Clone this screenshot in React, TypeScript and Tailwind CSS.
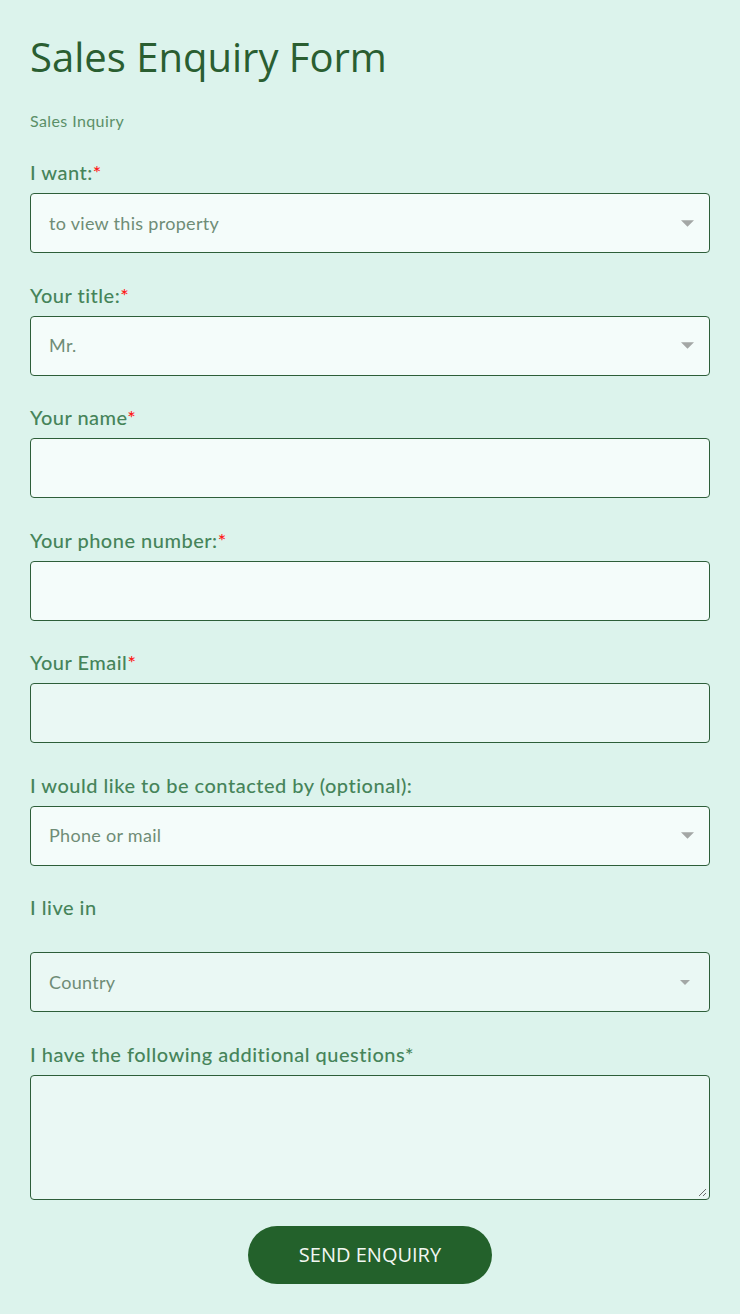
import React from 'react';

interface Field {
  label: string;
  required?: boolean;
  redStar?: boolean;
  kind: 'select' | 'input' | 'textarea';
  value?: string;
  tint?: boolean;
  spaced?: boolean;
  smallArrow?: boolean;
}

const fields: Field[] = [
  { label: 'I want:', required: true, redStar: true, kind: 'select', value: 'to view this property' },
  { label: 'Your title:', required: true, redStar: true, kind: 'select', value: 'Mr.' },
  { label: 'Your name', required: true, redStar: true, kind: 'input' },
  { label: 'Your phone number:', required: true, redStar: true, kind: 'input' },
  { label: 'Your Email', required: true, redStar: true, kind: 'input', tint: true },
  { label: 'I would like to be contacted by (optional):', kind: 'select', value: 'Phone or mail' },
  { label: 'I live in', kind: 'select', value: 'Country', tint: true, spaced: true, smallArrow: true },
  { label: 'I have the following additional questions', required: true, kind: 'textarea', tint: true },
];

const Caret: React.FC<{ small?: boolean }> = ({ small }) => (
  <svg
    width={small ? 10 : 13}
    height={small ? 5 : 7}
    viewBox="0 0 12 6"
    className={small ? 'mr-[4px]' : ''}
  >
    <path d="M0 0 L12 0 L6 6 Z" fill="#a3a7a5" />
  </svg>
);

const App: React.FC = () => {
  return (
    <div
      className="min-h-[1314px] w-full bg-[#dcf3ec] px-[30px] pt-[33px] pb-[30px]"
      style={{ fontFamily: 'Lato, "Open Sans", sans-serif' }}
    >
      <h1
        className="text-[40px] leading-[48px] text-[#2a5e31]"
        style={{ fontFamily: '"Open Sans", sans-serif' }}
      >
        Sales Enquiry Form
      </h1>
      <p className="mt-[30px] text-[16px] leading-[20px] tracking-[0.4px] text-[#5b8f68]">Sales Inquiry</p>

      <form className="mt-[30px] flex flex-col gap-[30.5px]">
        {fields.map((f) => (
          <div key={f.label} className="flex flex-col">
            <label
              className={`-mt-[1px] text-[20px] leading-[24px] font-medium tracking-[0.5px] text-[#46845a] ${
                f.spaced ? 'mb-[33px]' : 'mb-[9px]'
              }`}
            >
              {f.label}
              {f.required && (
                <span className={f.redStar ? 'text-[#ff1a1a]' : 'text-[#46845a]'}>*</span>
              )}
            </label>
            {f.kind === 'textarea' ? (
              <div className="relative h-[125px] rounded-[4px] border border-[#2d5e39] bg-[#eaf8f4]">
                <svg width="9" height="9" viewBox="0 0 9 9" className="absolute right-[2px] bottom-[2px]">
                  <path d="M8 1 L1 8 M8 5 L5 8" stroke="#6b6b6b" strokeWidth="1" />
                </svg>
              </div>
            ) : (
              <div
                className={`flex h-[60px] items-center justify-between rounded-[4px] border border-[#2d5e39] pl-[18px] pr-[15px] ${
                  f.tint ? 'bg-[#eaf8f4]' : 'bg-[#f4fcfa]'
                }`}
              >
                <span className="text-[18px] tracking-[0.3px] text-[#6f8c76]">{f.value ?? ''}</span>
                {f.kind === 'select' && <Caret small={f.smallArrow} />}
              </div>
            )}
          </div>
        ))}
        <div className="-mt-[4px] flex justify-center">
          <button
            type="button"
            className="h-[58px] w-[244px] rounded-full bg-[#23612b] text-[20px] text-[#f2f7f2]"
            style={{ fontFamily: '"Open Sans", sans-serif' }}
          >
            SEND ENQUIRY
          </button>
        </div>
      </form>
    </div>
  );
};

export default App;
